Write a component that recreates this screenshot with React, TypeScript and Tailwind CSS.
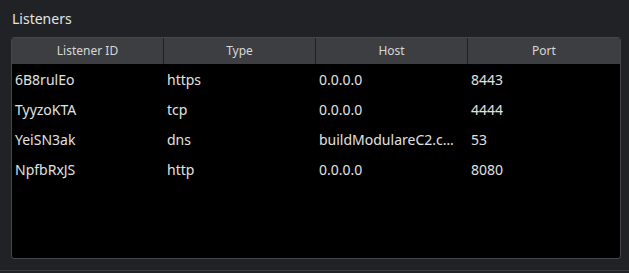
const listeners = [
  { id: "6B8rulEo", type: "https", host: "0.0.0.0", port: "8443" },
  { id: "TyyzoKTA", type: "tcp", host: "0.0.0.0", port: "4444" },
  { id: "YeiSN3ak", type: "dns", host: "buildModulareC2.com", port: "53" },
  { id: "NpfbRxJS", type: "http", host: "0.0.0.0", port: "8080" },
];

const columns = ["Listener ID", "Type", "Host", "Port"];

export default function App() {
  return (
    <div
      className="w-[629px] h-[273px] bg-[#212226] flex flex-col text-[#e2e2e2]"
      style={{ fontFamily: '"Noto Sans", "Open Sans", sans-serif' }}
    >
      <div className="h-[37px] pl-[12px] pt-[9px] text-[14px] leading-[20px] text-[#e4e4e4]">Listeners</div>

      <div className="ml-[11px] w-[610px] h-[222px] border border-[#46474b] rounded-[3px] bg-black overflow-hidden flex flex-col">
        {/* Header */}
        <div className="grid grid-cols-[152px_152px_152px_152px] h-[26px] shrink-0 bg-[#3d3e41] text-[12px] text-[#d8d8d8]">
          {columns.map((c, i) => (
            <div
              key={c}
              className={`flex items-center justify-center ${i < 3 ? "border-r border-[#202124]" : ""}`}
            >
              {c}
            </div>
          ))}
        </div>

        {/* Rows */}
        {listeners.map((l) => (
          <div key={l.id} className="grid grid-cols-[152px_152px_152px_152px] h-[30px] shrink-0 text-[14px]">
            <div className="flex items-center pl-[3px]">{l.id}</div>
            <div className="flex items-center pl-[3px]">{l.type}</div>
            <div className="flex items-center pl-[3px] pr-[8px] min-w-0">
              <span className="truncate">{l.host}</span>
            </div>
            <div className="flex items-center pl-[3px]">{l.port}</div>
          </div>
        ))}
      </div>

      <div className="mt-[11px] h-px bg-[#3b3c40]" />
    </div>
  );
}
